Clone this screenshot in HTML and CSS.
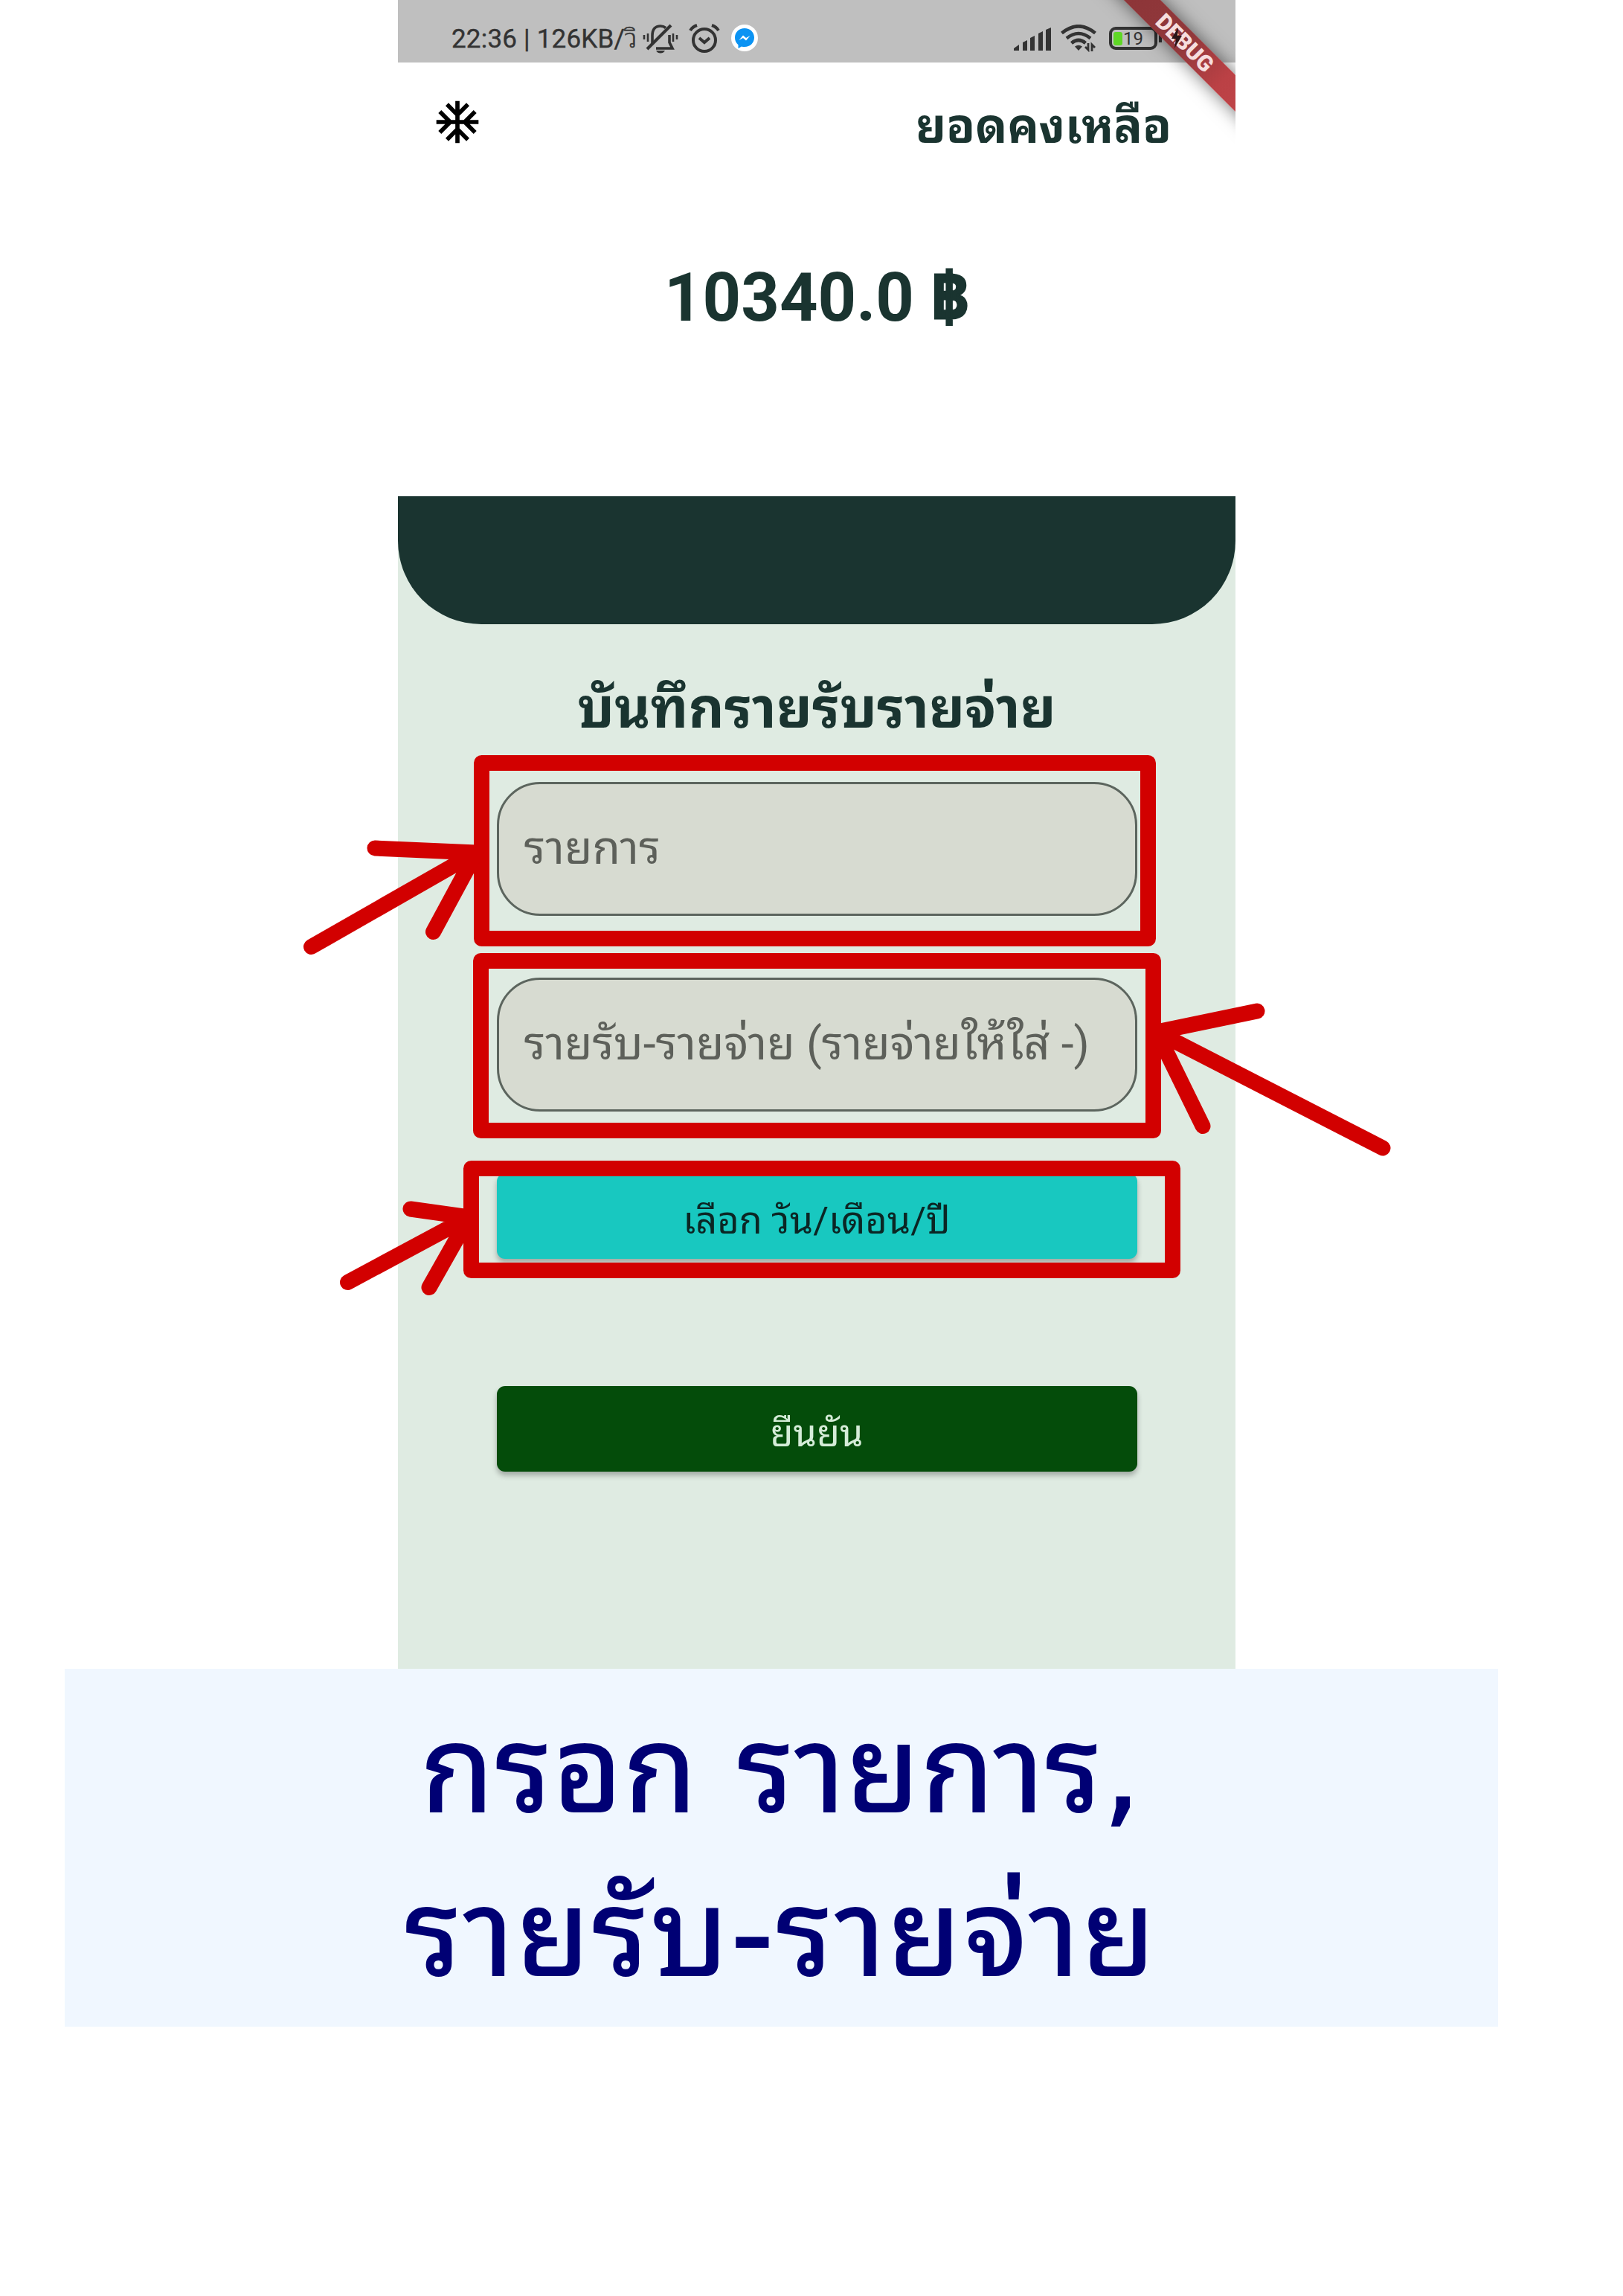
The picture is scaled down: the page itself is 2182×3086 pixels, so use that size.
FILE: index.html
```html
<!DOCTYPE html>
<html lang="th">
<head>
<meta charset="utf-8">
<title>บันทึกรายรับรายจ่าย</title>
<link rel="stylesheet" href="styles.css">
</head>
<body>
<div class="page">
  <main class="phone">
    <div class="statusbar">
      <span class="clock">22:36 | 126KB/<span class="unit">วิ</span></span>
      <svg class="ic-bell" viewBox="0 0 48 40" fill="none" stroke="#333" stroke-width="3.6">
        <path d="M13 27V16Q13 3 24 3Q28 3 31 5.500M36 15V25L40 33H18"/>
        <path d="M38 2L6 34" stroke-width="4"/>
        <path d="M18 36H30Q28 39.500 24 39.500Q20 39.500 18 36Z" fill="#333" stroke="none"/>
        <path d="M2 15V21M7 13V24M41 13V24M46 15V21" stroke-width="2.600"/>
      </svg>
      <svg class="ic-alarm" viewBox="0 0 42 40" fill="none" stroke="#333" stroke-width="4">
        <circle cx="21" cy="22" r="15"/>
        <path d="M14 19L21 25L28 19"/>
        <path d="M2 9Q5 4 11 2M40 9Q37 4 31 2" stroke-width="4"/>
      </svg>
      <svg class="ic-msg" viewBox="0 0 36 36">
        <circle cx="18" cy="18" r="18" fill="#fff"/>
        <path d="M18 5C10.500 5 5 10.300 5 17.500C5 21.500 6.700 25 9.500 27.200V32L14 29.500C15.300 29.900 16.600 30 18 30C25.500 30 31 24.700 31 17.500S25.500 5 18 5Z" fill="#0b93f3"/>
        <path d="M10.500 21L16 14.500L20 18L25.500 15L20 21.500L16 18Z" fill="#fff"/>
      </svg>
      <span class="spacer"></span>
      <svg class="ic-signal" viewBox="0 0 50 31" fill="#333">
        <path d="M0 31V28L7 23V31ZM12 31V20L18 17V31ZM22 31V14L28 11V31ZM33 31V8L39 5V31ZM43 31V3L50 0V31Z"/>
      </svg>
      <svg class="ic-wifi" viewBox="0 0 48 37" fill="none" stroke="#333" stroke-width="4.6">
        <path d="M1.500 11.500Q24 -7 46.500 11.500M8 18.500Q24 5.500 40 18.500M14.500 25Q24 17 33.500 25"/>
        <path d="M19 29.500Q24 26 29 29.500L24 35Z" fill="#333" stroke="none"/>
        <path d="M37 25V34L33 30M42 36V27L46 31" stroke-width="2.800"/>
      </svg>
      <div class="battery"><i></i><span>19</span></div>
    </div>
    <div class="debug">DEBUG</div>
    <svg class="ic-bolt" viewBox="0 0 14 28" fill="#2a1416"><path d="M9 0L0 15H6L4 28L14 11H8Z"/></svg>

    <header class="appbar">
      <svg class="ic-snow" viewBox="0 0 24 24"><path d="M22 11h-4.170l3.240-3.240-1.410-1.420L15 11h-2V9l4.660-4.660-1.420-1.410L13 6.170V2h-2v4.170L7.760 2.930 6.340 4.340 11 9v2H9L4.340 6.340 2.930 7.760 6.170 11H2v2h4.170l-3.240 3.240 1.410 1.420L9 13h2v2l-4.660 4.660 1.420 1.410L11 17.830V22h2v-4.170l3.240 3.240 1.420-1.410L13 15v-2h2l4.660 4.660 1.410-1.420L17.830 13H22z"/></svg>
      <h1 class="title">ยอดคงเหลือ</h1>
    </header>
    <div class="balance">10340.0 <span class="baht">฿</span></div>

    <section class="sheet">
      <div class="cap"></div>
      <h2 class="heading">บันทึกรายรับรายจ่าย</h2>
      <div class="field"><span>รายการ</span></div>
      <div class="field second"><span>รายรับ-รายจ่าย (รายจ่ายให้ใส่ -)</span></div>
      <div class="btn date"><span>เลือก วัน/เดือน/ปี</span></div>
      <div class="btn confirm"><span>ยืนยัน</span></div>
    </section>
  </main>

  <div class="caption">
    <span class="line one">กรอก รายการ,</span>
    <span class="line two">รายรับ-รายจ่าย</span>
  </div>

  <svg class="marks" viewBox="0 0 2182 3086">
    <rect x="647.500" y="1025.500" width="896" height="236"/>
    <rect x="646.500" y="1291.500" width="904" height="228"/>
    <rect x="633.500" y="1570.500" width="943" height="137"/>
    <path d="M418.500 1272.500L640 1146M504 1140L640 1146L582.500 1252.500"/>
    <path d="M1859 1543L1555 1387M1690 1359L1555 1387L1617 1513.500"/>
    <path d="M467.500 1723.500L630.500 1636M552 1625L630.500 1636L577 1730.500"/>
  </svg>
</div>
</body>
</html>
```
FILE: styles.css
```css
* { box-sizing: border-box; }
body { margin: 0; background: #fff; font-family: Roboto, "Noto Sans Thai Looped", Loma, Garuda, "Noto Sans Thai", "Noto Sans", sans-serif; }
.page { position: relative; width: 2182px; height: 3086px; overflow: hidden; background: #fff; }
.phone { position: relative; width: 1126px; height: 2243px; margin-left: 535px; overflow: hidden; display: flex; flex-direction: column; }

.statusbar { height: 84px; flex: none; background: #bfbfbf; display: flex; align-items: flex-start; padding: 32px 105px 0 72px; color: #333; }
.clock { font-size: 35px; line-height: 42px; width: 257px; white-space: nowrap; letter-spacing: .2px; -webkit-text-stroke: .4px #333; }
.unit { font-weight: 300; }
.statusbar svg { flex: none; display: block; }
.ic-bell { width: 48px; height: 40px; }
.ic-alarm { width: 42px; height: 40px; margin-left: 14px; }
.ic-msg { width: 36px; height: 36px; margin: 1px 0 0 15px; }
.spacer { flex: 1; }
.ic-signal { width: 50px; height: 31px; margin-top: 5px; }
.ic-wifi { width: 48px; height: 37px; margin: 1px 0 0 13px; }
.battery { position: relative; flex: none; width: 65px; height: 31px; margin: 4px 0 0 17px; border: 4px solid #333; border-radius: 9px; display: flex; align-items: center; padding-left: 2px; }
.battery::after { content: ""; position: absolute; right: -10px; top: 6px; width: 4px; height: 11px; background: #333; }
.battery i { width: 12px; height: 18px; background: #5fd726; border-radius: 3px; }
.battery span { font-size: 24px; line-height: 24px; margin-left: 1px; }
.ic-bolt { position: absolute; left: 1040px; top: 37px; width: 14px; height: 28px; }
.debug { position: absolute; left: 908px; top: 40px; width: 300px; height: 35px; transform: rotate(45deg); background: linear-gradient(90deg, #8b3437 0%, #91383b 50%, #bb4145 74%, #c0464a 100%); box-shadow: 0 0 24px rgba(0, 0, 0, .55); color: #f6dede; font-weight: 900; font-size: 30px; line-height: 36px; text-align: center; }

.appbar { height: 170px; flex: none; display: flex; justify-content: space-between; padding: 46px 86px 0 46px; color: #1a3430; }
.ic-snow { width: 68px; height: 68px; fill: #000; display: block; }
.title { margin: -1px 0 0; font-size: 63.5px; line-height: 84px; font-weight: 700; white-space: nowrap; }
.balance { height: 413px; flex: none; padding-top: 95px; text-align: center; font-size: 90px; line-height: 104px; font-weight: 700; color: #1a3430; white-space: nowrap; }
.baht { -webkit-text-stroke: 3px #1a3430; }

.sheet { flex: 1; background: #dfebe2; display: flex; flex-direction: column; align-items: center; }
.cap { width: 1126px; height: 172px; flex: none; background: #1a3430; border-radius: 0 0 112px 112px; }
.heading { margin: 62px 0 0; height: 150px; flex: none; font-size: 74.4px; line-height: 104px; font-weight: 700; color: #1a3430; white-space: nowrap; }
.field { width: 861px; height: 180px; flex: none; border: 3px solid #5c655e; border-radius: 58px; background: #d7dbd1; display: flex; align-items: center; padding: 0 0 15px 34px; font-size: 61px; color: #5d605a; white-space: nowrap; }
.field.second { margin-top: 83px; }
.btn { width: 861px; height: 115px; flex: none; border-radius: 11px; display: flex; align-items: center; justify-content: center; padding-top: 2px; font-size: 50.5px; white-space: nowrap; box-shadow: 0 5px 7px rgba(0, 0, 0, .28); }
.date { margin-top: 83px; background: #18c8c0; color: #0b2624; }
.confirm { margin-top: 171px; background: #044c0a; color: #d5ecd8; }

.caption { width: 1927px; height: 481px; margin-left: 87px; background: #f0f7ff; color: #000074; font-family: Waree, "DejaVu Sans", "Noto Sans Thai Looped", Loma, "Noto Sans Thai", sans-serif; display: flex; flex-direction: column; align-items: center; padding-top: 27px; font-size: 160px; white-space: nowrap; -webkit-text-stroke: 2px #000074; }
.line { display: block; height: 220px; line-height: 220px; }
.one { letter-spacing: 1.8px; }
.two { letter-spacing: 3.6px; }

.marks { position: absolute; left: 0; top: 0; width: 2182px; height: 3086px; fill: none; stroke: #d20000; stroke-width: 21px; stroke-linecap: round; stroke-linejoin: round; }
```
